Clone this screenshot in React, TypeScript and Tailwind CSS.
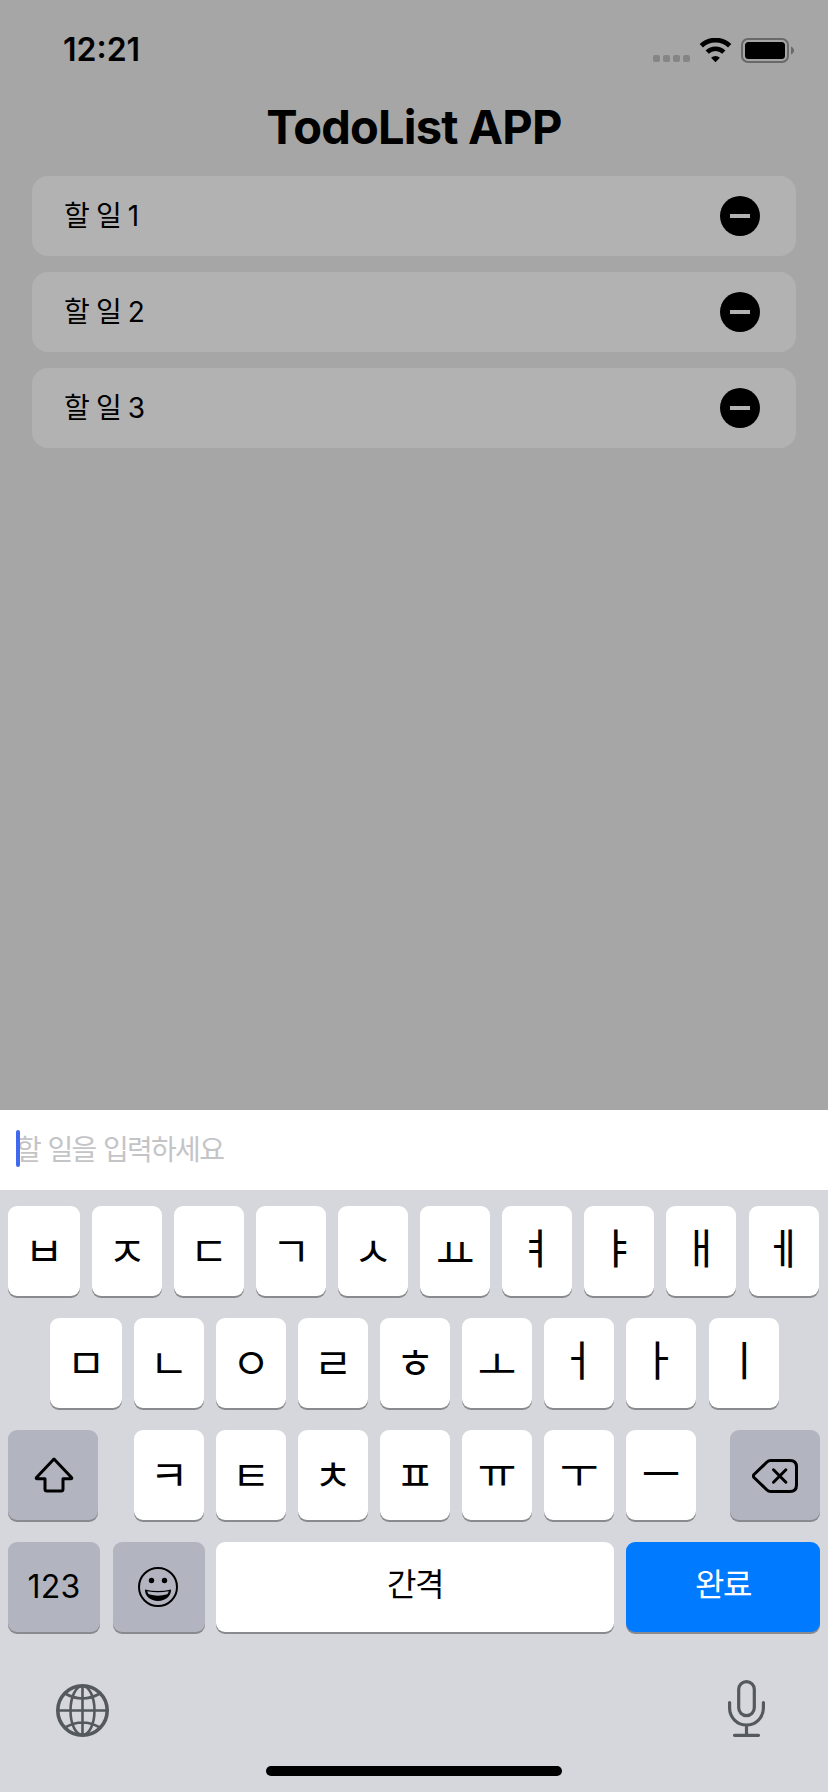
import type { ReactNode } from "react";

const SANS = "font-['Inter','Noto_Sans_CJK_KR',sans-serif]";
const KR = "font-['Noto_Sans_CJK_KR',sans-serif]";

const todos = ["할 일 1", "할 일 2", "할 일 3"];

function StatusBar() {
  return (
    <header className="flex h-[100px] items-center justify-between pr-[33px] pl-[63px]">
      <span className="text-[32px] leading-none font-semibold">12:21</span>
      <svg className="h-[25px] w-[142px]" viewBox="0 0 142 25">
        <g fill="#858585">
          <rect x="0" y="17" width="7" height="7" rx="2" />
          <rect x="10" y="17" width="7" height="7" rx="2" />
          <rect x="20" y="17" width="7" height="7" rx="2" />
          <rect x="30" y="17" width="7" height="7" rx="2" />
        </g>
        <g fill="none" stroke="#000" strokeWidth="4.7">
          <path d="M48.3 7.8a20.5 20.5 0 0 1 28.4 0" />
          <path d="M54.2 14.1a12 12 0 0 1 16.6 0" />
        </g>
        <path d="M62.5 24.2l-4.4-4.4a6.2 6.2 0 0 1 8.8 0z" fill="#000" />
        <rect x="89" y="1" width="46" height="23" rx="6" fill="none" stroke="#696969" strokeWidth="2" />
        <rect x="92" y="4" width="40" height="17" rx="3.5" fill="#000" />
        <path d="M138 8.5c4 1.5 4 6.500 0 8z" fill="#696969" />
      </svg>
    </header>
  );
}

function TodoItem({ text }: { text: string }) {
  return (
    <li className="flex h-20 items-center justify-between rounded-2xl bg-[#b2b2b2] pr-9 pl-8">
      <span className="text-[28px] leading-none tracking-[-1.7px] [word-spacing:1.7px]">{text}</span>
      <svg className="size-10" viewBox="0 0 40 40">
        <circle cx="20" cy="20" r="20" />
        <rect x="10" y="18" width="20" height="4" fill="#b2b2b2" />
      </svg>
    </li>
  );
}

function Key({ className, children }: { className: string; children: ReactNode }) {
  return (
    <button className={`flex h-[90px] shrink-0 items-center justify-center rounded-[9px] shadow-[0_2px_0_#898a8d] ${className}`}>
      {children}
    </button>
  );
}

// Optical centring: each jamo sits differently inside its em box.
const jamoPadding: Record<string, string> = {
  ㅛ: "pb-px",
  ㅗ: "pb-px",
  ㅕ: "pb-2.5 pr-0.5",
  ㅑ: "pb-2.5 pr-0.5",
  ㅓ: "pb-2.5 pr-0.5",
  ㅏ: "pb-2.5 pr-[5px]",
  ㅐ: "pb-2.5",
  ㅔ: "pb-2.5 pr-px",
  ㅣ: "pb-2.5",
  ㅠ: "pb-[11px]",
  ㅜ: "pb-[11px]",
  ㅡ: "pb-[6px]",
};

function LetterKey({ letter, width = "w-[70px]" }: { letter: string; width?: string }) {
  return (
    <Key className={`bg-white ${width} ${jamoPadding[letter] ?? "pb-[5px]"}`}>
      <span className={`${KR} text-[42px] leading-none`}>{letter}</span>
    </Key>
  );
}

function LetterKeys({ letters }: { letters: string }) {
  return letters.split("").map((letter) => <LetterKey key={letter} letter={letter} />);
}

function Keyboard() {
  return (
    <section className="flex flex-1 flex-col bg-[#d6d7dc] pt-4">
      <div className="flex flex-col gap-[22px]">
        <div className="flex gap-3 px-2">
          <LetterKey letter="ㅂ" width="w-[72px]" />
          <LetterKeys letters="ㅈㄷㄱㅅㅛㅕㅑㅐ" />
          <div className="pl-px">
            <LetterKey letter="ㅔ" />
          </div>
        </div>
        <div className="flex gap-3 px-[50px]">
          <LetterKey letter="ㅁ" width="w-[72px]" />
          <LetterKeys letters="ㄴㅇㄹㅎㅗㅓㅏ" />
          <div className="pl-px">
            <LetterKey letter="ㅣ" />
          </div>
        </div>
        <div className="flex px-2">
          <Key className="w-[90px] bg-[#b2b4c0] pl-0.5">
            <svg className="h-[36px] w-[40px]" viewBox="0 0 40 36" fill="none" stroke="#000" strokeWidth="3" strokeLinejoin="round">
              <path d="M20 2L2.500 20.500q-.8 1.300.8 1.300H11V32q0 2 2 2h14q2 0 2-2V21.800h7.700q1.600 0 .8-1.300z" />
            </svg>
          </Key>
          <div className="ml-9 flex gap-3">
            <LetterKeys letters="ㅋㅌㅊㅍㅠㅜㅡ" />
          </div>
          <Key className="ml-auto w-[90px] bg-[#b2b4c0] pt-px">
            <svg className="h-[34px] w-[46px]" viewBox="0 0 46 34" fill="none" stroke="#000" strokeWidth="3" strokeLinecap="round" strokeLinejoin="round">
              <path d="M18.500 1.500H38q6.500 0 6.500 6.500v18q0 6.500-6.500 6.500H18.500q-2 0-3.500-1.500L2 18.500q-1.300-1.500 0-3L15 3q1.500-1.500 3.500-1.500z" />
              <path d="M21.500 10.800l12.400 12.400M33.900 10.800L21.500 23.200" />
            </svg>
          </Key>
        </div>
        <div className="flex px-2">
          <Key className="w-[92px] bg-[#b2b4c0]">
            <span className="text-[32px] leading-none tracking-[0.3px]">123</span>
          </Key>
          <Key className="ml-[13px] w-[92px] bg-[#b2b4c0] pr-0.5">
            <svg className="size-10" viewBox="0 0 40 40">
              <circle cx="20" cy="20" r="19" fill="none" stroke="#000" strokeWidth="2" />
              <circle cx="13.500" cy="13.500" r="2.700" />
              <circle cx="26.500" cy="13.500" r="2.700" />
              <path d="M7 22.500q13 3 26 0c.3 6.500-5.500 11.500-13 11.500S6.700 29 7 22.500z" />
              <path d="M9.300 24.300q10.700 2 21.400 0c-.2 1.500-.8 2.300-1.500 3q-9.200 2.900-18.400 0c-.7-.7-1.300-1.500-1.500-3z" fill="#b2b4c0" />
            </svg>
          </Key>
          <Key className="ml-[11px] w-[398px] bg-white pb-1">
            <span className="text-[32px] leading-none tracking-[-1.5px]">간격</span>
          </Key>
          <Key className="ml-3 w-[194px] bg-[#007aff] pb-1 text-white">
            <span className="text-[32px] leading-none tracking-[-1.5px]">완료</span>
          </Key>
        </div>
      </div>
      <div className="mt-12 flex justify-between pr-[63px] pl-14 text-[#54595d]">
        <svg className="mt-1 size-[53px]" viewBox="0 0 53 53" fill="none" stroke="currentColor" strokeWidth="2.600">
          <circle cx="26.500" cy="26.500" r="24.700" strokeWidth="3.600" />
          <ellipse cx="26.500" cy="26.500" rx="12" ry="24.500" />
          <path d="M26.500 2v49M2 26.500h49M9 9.500q17.500 10 35 0M9 43.500q17.500-10 35 0" />
        </svg>
        <svg className="h-[57px] w-[37px]" viewBox="0 0 37 57" fill="none" stroke="currentColor" strokeWidth="3.200" strokeLinecap="round">
          <rect x="10.700" y="1.600" width="15.600" height="34" rx="7.800" />
          <path d="M1.600 22.500v5.500a16.900 17 0 0 0 33.800 0v-5.500M18.500 46v9M6.500 55.300h24" />
        </svg>
      </div>
      <div className="mt-auto mb-4 h-[10px] w-[296px] self-center rounded-full bg-black" />
    </section>
  );
}

export default function App() {
  return (
    <div className={`${SANS} flex h-[1792px] w-[828px] flex-col bg-[#a6a6a6] text-black`}>
      <StatusBar />
      <main className="flex h-[1010px] flex-col px-8">
        <h1 className="flex h-[76px] items-start justify-center pt-[3px] text-[47px] leading-[48px] font-bold tracking-[-0.8px]">TodoList APP</h1>
        <ul className="flex flex-col gap-4">
          {todos.map((text) => (
            <TodoItem key={text} text={text} />
          ))}
        </ul>
      </main>
      <div className="flex h-20 items-center bg-white px-4">
        <div className="relative flex items-center">
          <span className="absolute -top-1.5 left-0 h-[37px] w-1 rounded-[2px] bg-[#4169f0]" />
          <span className="text-[28px] leading-none tracking-[-1.7px] text-[#c4c4c6] [word-spacing:1.2px]">할 일을 입력하세요</span>
        </div>
      </div>
      <Keyboard />
    </div>
  );
}
